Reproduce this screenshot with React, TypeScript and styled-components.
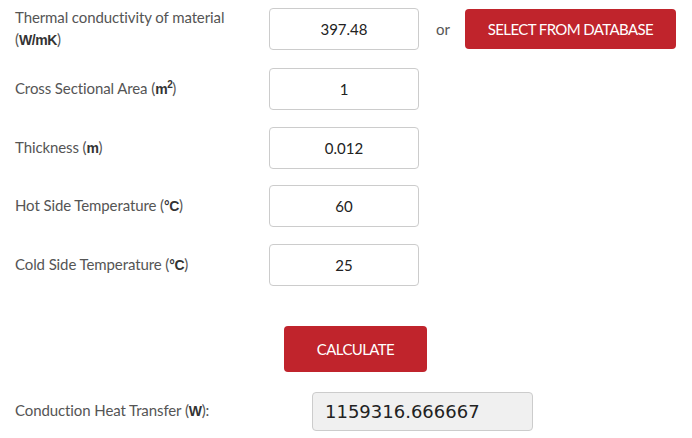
import React from "react";
import styled, { createGlobalStyle } from "styled-components";

const Global = createGlobalStyle`
  html, body { margin: 0; padding: 0; background: #fff; }
  body { font-family: Lato, "Open Sans", sans-serif; }
`;

const Page = styled.div`
  width: 692px;
  height: 438px;
  box-sizing: border-box;
  padding: 5.5px 0 0 15px;
  display: flex;
  flex-direction: column;
`;

const Form = styled.div`
  display: flex;
  flex-direction: column;
  gap: 16.5px;
`;

const Row = styled.div`
  display: flex;
  align-items: center;
  min-height: 42px;
`;

const Label = styled.div`
  width: 254px;
  font-size: 15px;
  line-height: 22.5px;
  color: #555;
  letter-spacing: -0.1px;
  b { color: #333; font-family: "Liberation Sans", Arial, sans-serif; font-size: 14px; letter-spacing: -0.4px; }
  sup { font-size: 10px; line-height: 0; }
`;

const Input = styled.input`
  width: 150px;
  height: 42px;
  box-sizing: border-box;
  border: 1px solid #ccc;
  border-radius: 4px;
  text-align: center;
  font-family: Lato, sans-serif;
  font-size: 15px;
  color: #222;
  outline: none;
  padding: 0;
`;

const Or = styled.span`
  margin: 0 15px 0 17px;
  font-size: 15px;
  color: #555;
`;

const RedButton = styled.button<{ $w: number; $h: number }>`
  width: ${(p) => p.$w}px;
  height: ${(p) => p.$h}px;
  background: #c0242c;
  color: #fff;
  border: none;
  border-radius: 4px;
  font-family: Lato, sans-serif;
  font-size: 15px;
  letter-spacing: -0.6px;
  text-transform: uppercase;
  cursor: pointer;
  padding: 0;
`;

const CalcWrap = styled.div`
  display: flex;
  padding-left: 269px;
  margin-top: 40px;
`;

const ResultRow = styled.div`
  display: flex;
  align-items: center;
  margin-top: 20px;
`;

const ResultLabel = styled(Label)`
  width: 297px;
`;

const ResultBox = styled.div`
  width: 221px;
  height: 39px;
  box-sizing: border-box;
  background: #f0f0f0;
  border: 1px solid #ccc;
  border-radius: 4px;
  display: flex;
  align-items: center;
  padding-left: 12px;
  font-family: "DejaVu Sans", sans-serif;
  font-size: 18px;
  color: #222;
`;

const rows: { label: React.ReactNode; value: string }[] = [
  { label: <>Cross Sectional Area (<b>m<sup>2</sup></b>)</>, value: "1" },
  { label: <>Thickness (<b>m</b>)</>, value: "0.012" },
  { label: <>Hot Side Temperature (<b>°C</b>)</>, value: "60" },
  { label: <>Cold Side Temperature (<b>°C</b>)</>, value: "25" },
];

export default function App() {
  return (
    <>
      <Global />
      <Page>
        <Form>
          <Row>
            <Label>
              Thermal conductivity of material
              <br />(<b>W/mK</b>)
            </Label>
            <Input defaultValue="397.48" />
            <Or>or</Or>
            <RedButton $w={211} $h={40}>Select from database</RedButton>
          </Row>
          {rows.map((r, i) => (
            <Row key={i}>
              <Label>{r.label}</Label>
              <Input defaultValue={r.value} />
            </Row>
          ))}
        </Form>
        <CalcWrap>
          <RedButton $w={143} $h={46}>Calculate</RedButton>
        </CalcWrap>
        <ResultRow>
          <ResultLabel>
            Conduction Heat Transfer (<b>W</b>):
          </ResultLabel>
          <ResultBox>1159316.666667</ResultBox>
        </ResultRow>
      </Page>
    </>
  );
}
